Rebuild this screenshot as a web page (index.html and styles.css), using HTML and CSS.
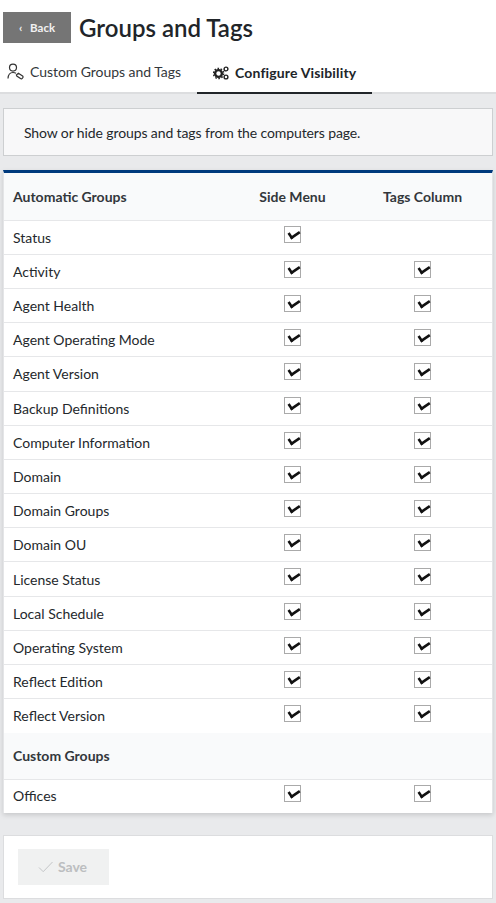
FILE: index.html
```html
<!DOCTYPE html>
<html lang="en">
<head>
    <meta charset="UTF-8">
    <meta name="viewport" content="width=device-width, initial-scale=1.0">
    <title>Groups and Tags</title>
    <link rel="stylesheet" href="styles.css">
</head>
<body>

    <div class="cabecalho">
        <button class="voltar"><span class="seta">&#8249;</span> Back</button>
        <h1>Groups and Tags</h1>
    </div>

    <div class="abas">
        <div class="aba">
            <svg class="icone-aba" width="18" height="18" viewBox="0 0 18 18" fill="none" stroke="#333" stroke-width="1.2">
                <circle cx="6" cy="5.6" r="3.5"/>
                <path d="M1 16.5c.2-3.6 2.2-6 5-6 1.2 0 2.2.3 3 .8"/>
                <path d="M9.4 13l2-1.8 4.2 2.8a1.2 1.2 0 0 1 .2 1.7l-.6.7a1.2 1.2 0 0 1-1.7.2l-3.7-2.6z"/>
            </svg>
            Custom Groups and Tags
        </div>
        <div class="aba ativa">
            <svg class="icone-aba" width="16" height="14" viewBox="0 0 16 14" fill="#222">
                <circle cx="5.5" cy="7.5" r="3.4" fill="none" stroke="#222" stroke-width="2.4"/>
                <circle cx="5.5" cy="7.5" r="5.1" fill="none" stroke="#222" stroke-width="1.4" stroke-dasharray="1.6 1.6"/>
                <circle cx="13" cy="3" r="1.9" fill="none" stroke="#222" stroke-width="1.4"/>
                <circle cx="13" cy="11" r="1.9" fill="none" stroke="#222" stroke-width="1.4"/>
            </svg>
            Configure Visibility
        </div>
    </div>

    <div class="conteudo">
        <div class="aviso">Show or hide groups and tags from the computers page.</div>

        <div class="tabela">
            <div class="linha titulo">
                <div>Automatic Groups</div>
                <div class="centro">Side Menu</div>
                <div class="centro">Tags Column</div>
            </div>

            <div class="linha"><div>Status</div><div class="centro"><span class="caixa"></span></div><div></div></div>
            <div class="linha"><div>Activity</div><div class="centro"><span class="caixa"></span></div><div class="centro"><span class="caixa"></span></div></div>
            <div class="linha"><div>Agent Health</div><div class="centro"><span class="caixa"></span></div><div class="centro"><span class="caixa"></span></div></div>
            <div class="linha"><div>Agent Operating Mode</div><div class="centro"><span class="caixa"></span></div><div class="centro"><span class="caixa"></span></div></div>
            <div class="linha"><div>Agent Version</div><div class="centro"><span class="caixa"></span></div><div class="centro"><span class="caixa"></span></div></div>
            <div class="linha"><div>Backup Definitions</div><div class="centro"><span class="caixa"></span></div><div class="centro"><span class="caixa"></span></div></div>
            <div class="linha"><div>Computer Information</div><div class="centro"><span class="caixa"></span></div><div class="centro"><span class="caixa"></span></div></div>
            <div class="linha"><div>Domain</div><div class="centro"><span class="caixa"></span></div><div class="centro"><span class="caixa"></span></div></div>
            <div class="linha"><div>Domain Groups</div><div class="centro"><span class="caixa"></span></div><div class="centro"><span class="caixa"></span></div></div>
            <div class="linha"><div>Domain OU</div><div class="centro"><span class="caixa"></span></div><div class="centro"><span class="caixa"></span></div></div>
            <div class="linha"><div>License Status</div><div class="centro"><span class="caixa"></span></div><div class="centro"><span class="caixa"></span></div></div>
            <div class="linha"><div>Local Schedule</div><div class="centro"><span class="caixa"></span></div><div class="centro"><span class="caixa"></span></div></div>
            <div class="linha"><div>Operating System</div><div class="centro"><span class="caixa"></span></div><div class="centro"><span class="caixa"></span></div></div>
            <div class="linha"><div>Reflect Edition</div><div class="centro"><span class="caixa"></span></div><div class="centro"><span class="caixa"></span></div></div>
            <div class="linha sem-borda"><div>Reflect Version</div><div class="centro"><span class="caixa"></span></div><div class="centro"><span class="caixa"></span></div></div>

            <div class="linha titulo segundo">
                <div>Custom Groups</div>
            </div>

            <div class="linha sem-borda ultima"><div>Offices</div><div class="centro"><span class="caixa"></span></div><div class="centro"><span class="caixa"></span></div></div>
        </div>

        <div class="rodape">
            <button class="salvar">
                <svg width="16" height="12" viewBox="0 0 16 12" fill="none" stroke="#c4c6c8" stroke-width="1">
                    <path d="M1 6.5l4.2 4.2L14.5 1"/>
                </svg>
                Save
            </button>
        </div>
    </div>

</body>
</html>
```

FILE: styles.css
```css
* {
    margin: 0;
    padding: 0;
    box-sizing: border-box;
}

body {
    font-family: 'Lato', sans-serif;
    font-size: 14px;
    color: #24282c;
    background: #fff;
    height: 903px;
    overflow: hidden;
}

.cabecalho {
    display: flex;
    align-items: flex-start;
    gap: 8px;
    padding: 12px 3px 0;
    height: 55px;
}

.cabecalho h1 {
    font-size: 24px;
    font-weight: 600;
    color: #212529;
    line-height: 31px;
}

.voltar {
    width: 68px;
    height: 31px;
    border: none;
    background: #757575;
    color: #f1f1f1;
    font-family: inherit;
    font-size: 11.5px;
    font-weight: 700;
}

.voltar .seta {
    margin-right: 5px;
}

.abas {
    display: flex;
    height: 39px;
    border-bottom: 2px solid #dcdddf;
}

.aba {
    display: flex;
    align-items: center;
    height: 39px;
    gap: 5px;
    padding: 0 6px 7px 7px;
    width: 197px;
    color: #33373b;
    letter-spacing: -0.05px;
}

.aba.ativa {
    width: 175px;
    padding: 0 0 2px 16px;
    gap: 6px;
    font-weight: 700;
    border-bottom: 2px solid #212529;
    color: #212529;
    letter-spacing: 0.15px;
}

.conteudo {
    background: #e9eaec;
    height: 809px;
    padding: 14px 3px 0;
}

.aviso {
    height: 48px;
    padding-left: 20px;
    display: flex;
    align-items: center;
    background: #f8f8f9;
    border: 1px solid #cdcfd1;
    margin-bottom: 14px;
    letter-spacing: -0.11px;
}

.tabela {
    background: #fff;
    border-top: 3px solid #003a7d;
    border-left: 1px solid #e4e5e7;
    border-right: 1px solid #e4e5e7;
    box-shadow: 0 2px 5px rgba(0, 0, 0, 0.15);
    margin-bottom: 22px;
}

.linha {
    display: grid;
    grid-template-columns: 219px 130px 130px;
    align-items: center;
    height: 34.2px;
    padding-left: 9px;
    border-bottom: 1px solid #e6e7e9;
}

.linha.titulo {
    height: 47.6px;
    background: #f9fafb;
    font-weight: 700;
    color: #33373b;
}

.linha.segundo {
    height: 47px;
}

.linha.sem-borda {
    height: 33.4px;
    border-bottom: none;
}

.linha.ultima {
    height: 33px;
    padding-bottom: 1px;
}

.centro {
    display: flex;
    justify-content: center;
    margin-left: -9px;
}

.caixa {
    position: relative;
    display: block;
    width: 17px;
    height: 17px;
    border: 1px solid #aaa;
    background: #fff;
    margin-top: -4.4px;
}

/* o check dentro da caixa */
.caixa::after {
    content: "";
    position: absolute;
    left: 5px;
    top: 0;
    width: 5px;
    height: 10px;
    border: solid #111;
    border-width: 0 3.5px 3.5px 0;
    transform: rotate(56deg) scale(0.85);
}

.rodape {
    height: 64.5px;
    padding: 13px 14px;
    background: #fff;
    border: 1px solid #dcdddf;
}

.salvar {
    display: flex;
    align-items: center;
    justify-content: center;
    gap: 4px;
    width: 91px;
    height: 36px;
    padding-right: 2px;
    border: none;
    background: #f0f1f1;
    color: #bcbec0;
    font-family: inherit;
    font-size: 14px;
    font-weight: 700;
}
```
